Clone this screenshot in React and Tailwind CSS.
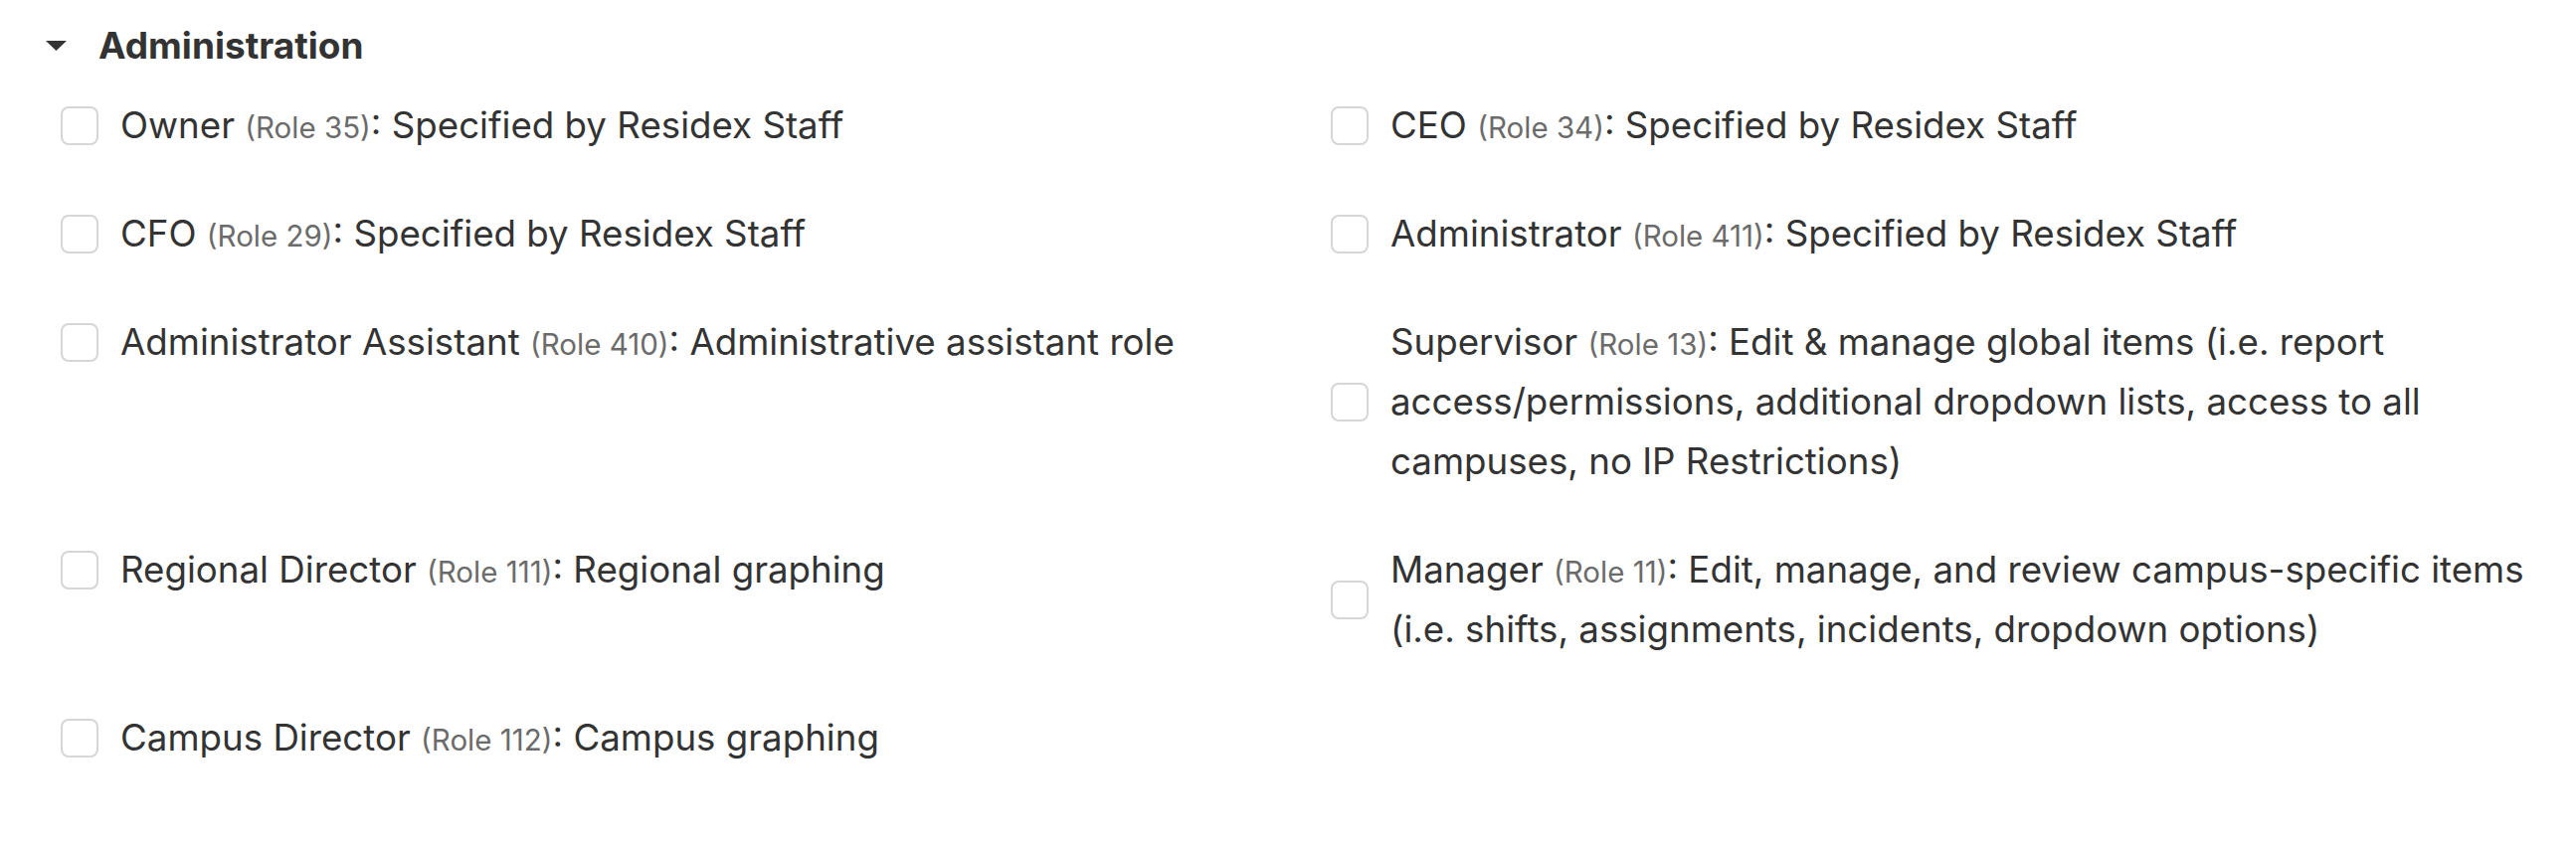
import { useState } from "react";

const roles = [
  { name: "Owner", id: 35, desc: "Specified by Residex Staff" },
  { name: "CEO", id: 34, desc: "Specified by Residex Staff" },
  { name: "CFO", id: 29, desc: "Specified by Residex Staff" },
  { name: "Administrator", id: 411, desc: "Specified by Residex Staff" },
  { name: "Administrator Assistant", id: 410, desc: "Administrative assistant role" },
  {
    name: "Supervisor",
    id: 13,
    desc: "Edit & manage global items (i.e. report access/permissions, additional dropdown lists, access to all campuses, no IP Restrictions)",
  },
  { name: "Regional Director", id: 111, desc: "Regional graphing" },
  {
    name: "Manager",
    id: 11,
    desc: "Edit, manage, and review campus-specific items (i.e. shifts, assignments, incidents, dropdown options)",
  },
  { name: "Campus Director", id: 112, desc: "Campus graphing" },
];

function RoleItem({ role, checked, onToggle }) {
  return (
    <label className="flex items-center gap-[22px] cursor-pointer">
      <input
        type="checkbox"
        checked={checked}
        onChange={onToggle}
        className="appearance-none shrink-0 w-[38px] h-[39px] border-2 border-[#d6d6d6] rounded-[8px] bg-white checked:bg-[#3b82f6] checked:border-[#3b82f6]"
      />
      <span className="text-[36.7px] leading-[60px] text-[#333333]">
        {role.name}{" "}
        <span className="text-[29.5px] leading-none text-[#6b6b6b]">(Role {role.id})</span>: {role.desc}
      </span>
    </label>
  );
}

export default function App() {
  const [open, setOpen] = useState(true);
  const [selected, setSelected] = useState({});

  const toggle = (id) => setSelected((s) => ({ ...s, [id]: !s[id] }));

  return (
    <div className="w-[2590px] h-[846px] bg-white font-['Inter','Noto_Sans',sans-serif] pl-[46px] pr-[46px] pt-[15px]">
      <button
        className="flex items-center gap-[32px] h-[61px] text-[#333333]"
        onClick={() => setOpen(!open)}
      >
        <svg width="21" height="10" viewBox="0 0 21 10" className={open ? "" : "-rotate-90"}>
          <polygon points="0,0 21,0 10.5,10" fill="#333333" />
        </svg>
        <span className="text-[37px] font-bold">Administration</span>
      </button>

      {open && (
        <div className="grid grid-cols-2 gap-x-[71px] gap-y-[49px] items-start ml-[15px] mt-[20px]">
          {roles.map((r) => (
            <RoleItem key={r.id} role={r} checked={!!selected[r.id]} onToggle={() => toggle(r.id)} />
          ))}
        </div>
      )}
    </div>
  );
}
